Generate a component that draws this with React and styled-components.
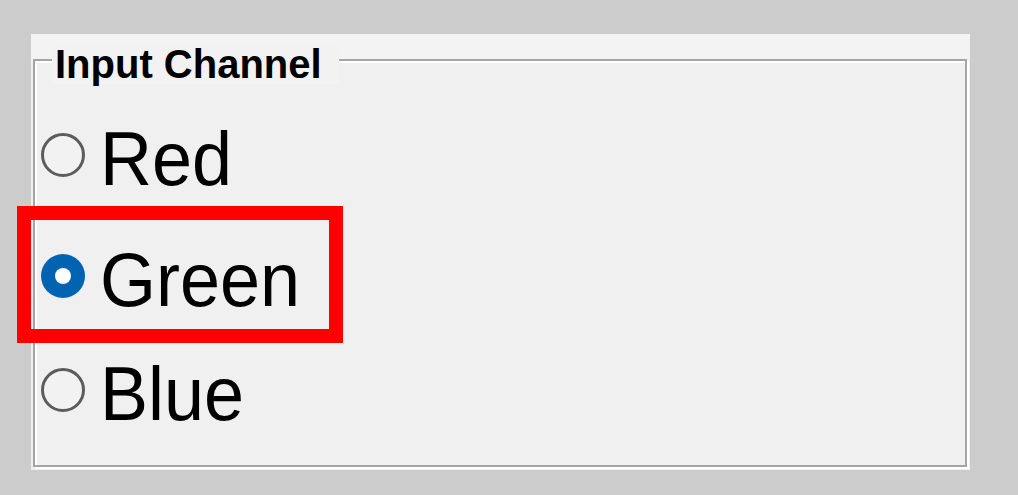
import React from "react";
import styled, { createGlobalStyle } from "styled-components";

const GlobalStyle = createGlobalStyle`
  html, body {
    margin: 0;
    padding: 0;
    background: #cccccc;
  }
  body {
    font-family: "Liberation Sans", Arial, sans-serif;
  }
`;

const Page = styled.div`
  width: 1018px;
  height: 495px;
  padding: 34px 0 0 31px;
  box-sizing: border-box;
`;

const Panel = styled.div`
  width: 939px;
  height: 436px;
  box-sizing: border-box;
  padding: 25px 0 0 2px;
  background: linear-gradient(#f3f3f3 0 25px, #f0f0f0 25px);
`;

const Frame = styled.div`
  position: relative;
  width: 934px;
  height: 408px;
  box-sizing: border-box;
  border: 2px solid #a5a5a5;
  box-shadow: 2px 2px 0 #ffffff, inset 2px 2px 0 #ffffff;
  padding: 63px 0 0 6px;
`;

const Legend = styled.div`
  position: absolute;
  top: -17px;
  left: 17px;
  padding: 0 17px 0 3px;
  background: #f2f2f2;
  font-size: 40px;
  line-height: 40px;
  font-weight: bold;
  color: #000;
`;

const Options = styled.div`
  display: grid;
  grid-template-rows: 121px 114px 72px;
`;

const Row = styled.label`
  position: relative;
  display: flex;
  align-items: flex-start;
  height: 72px;
`;

const Radio = styled.span`
  width: 44px;
  height: 44px;
  margin-top: 9px;
  border-radius: 50%;
  box-sizing: border-box;
  flex-shrink: 0;
  display: flex;
  align-items: center;
  justify-content: center;
  border: ${(p) => (p.$checked ? "none" : "3px solid #5c5c5c")};
  background: ${(p) => (p.$checked ? "#0063b1" : "#f2f2f2")};

  &::after {
    content: "";
    display: ${(p) => (p.$checked ? "block" : "none")};
    width: 16px;
    height: 16px;
    border-radius: 50%;
    background: #ffffff;
  }
`;

const Label = styled.span`
  display: inline-block;
  margin-left: 15px;
  font-size: 72px;
  line-height: 72px;
  color: #000;
  transform: scaleY(1.06);
  transform-origin: 0 61px;
`;

const Highlight = styled.div`
  position: absolute;
  left: -24px;
  top: -39px;
  width: 326px;
  height: 137px;
  box-sizing: border-box;
  border: 14px solid #ff0000;
  pointer-events: none;
`;

const channels = [
  { name: "Red", checked: false },
  { name: "Green", checked: true },
  { name: "Blue", checked: false },
];

export default function App() {
  return (
    <>
      <GlobalStyle />
      <Page>
        <Panel>
          <Frame>
            <Legend>Input Channel</Legend>
            <Options>
              {channels.map((c) => (
                <Row key={c.name}>
                  <Radio $checked={c.checked} />
                  <Label>{c.name}</Label>
                  {c.checked && <Highlight />}
                </Row>
              ))}
            </Options>
          </Frame>
        </Panel>
      </Page>
    </>
  );
}
